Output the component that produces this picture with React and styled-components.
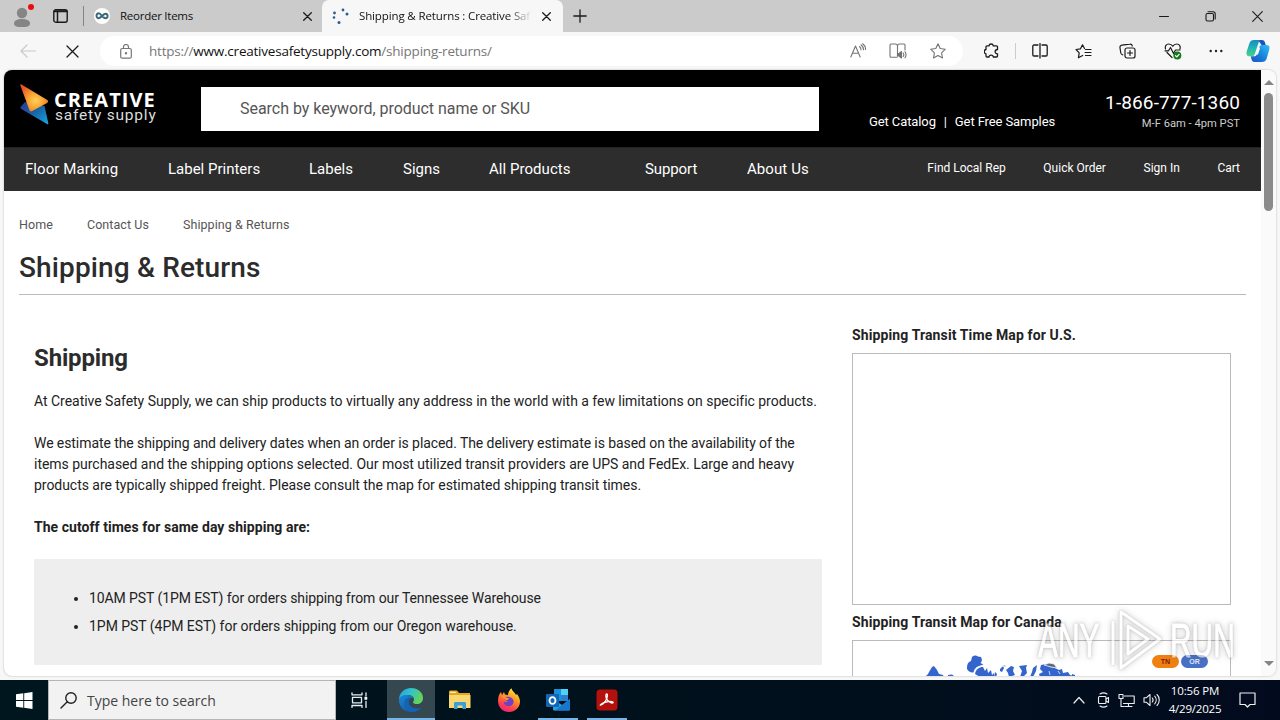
import React from "react";
import styled, { createGlobalStyle, css } from "styled-components";

const navLinks = [
  { label: "Floor Marking", width: 143, spacing: 0.08 },
  { label: "Label Printers", width: 141, spacing: 0 },
  { label: "Labels", width: 94, spacing: 0 },
  { label: "Signs", width: 86, spacing: 0 },
  { label: "All Products", width: 156, spacing: 0.05 },
  { label: "Support", width: 102, spacing: -0.1 },
  { label: "About Us", width: 70, spacing: 0.08 },
];

const accountLinks = ["Find Local Rep", "Quick Order", "Sign In", "Cart"];
const breadcrumbs = ["Home", "Contact Us", "Shipping & Returns"];

const cutoffs = [
  {
    text: "10AM PST (1PM EST) for orders shipping from our Tennessee Warehouse",
    spacing: -0.09,
  },
  {
    text: "1PM PST (4PM EST) for orders shipping from our Oregon warehouse.",
    spacing: -0.035,
  },
];

const Icon = ({ w = 18, h = w, children, color = "#1b1b1b", sw = 1.2 }) => (
  <IconSvg
    width={w}
    height={h}
    viewBox={`0 0 ${w} ${h}`}
    fill="none"
    stroke={color}
    strokeWidth={sw}
    strokeLinecap="round"
    strokeLinejoin="round"
  >
    {children}
  </IconSvg>
);

const CloseIcon = () => (
  <Icon w={9} sw={1.3}>
    <path d="M.7.7l7.6 7.6M8.3.7L.7 8.3" />
  </Icon>
);

const TabStrip = () => (
  <Strip>
    <Profile>
      <Icon w={18} h={20} color="none">
        <circle cx="9" cy="6" r="5.2" fill="#858585" />
        <path d="M1 16.500c0-3 3-4.500 8-4.500s8 1.500 8 4.500-3.500 3.500-8 3.500-8-.5-8-3.500z" fill="#858585" />
      </Icon>
      <Dot />
    </Profile>
    <Icon w={15} h={14} sw={1.4}>
      <rect x=".8" y=".8" width="13.400" height="12.400" rx="2" />
      <path d="M1.500 2.300h12" strokeWidth="2" />
      <path d="M4.500 3v10" strokeWidth="1.500" />
    </Icon>
    <StripRule />
    <BackTab>
      <Icon w={16} color="none">
        <circle cx="8" cy="8" r="8" fill="#fdfdfd" />
        <path d="M8 8C6 5.500 4.800 5 3.800 5.500 2 6.300 2 9.300 4 10.200 5.500 10.700 7 9 8 8s2.500-2.700 4-2.300c2 .6 2.300 3.600.3 4.400C10.700 10.800 9.500 9.500 8 8z" stroke="#3b6878" strokeWidth="2" />
      </Icon>
      <BackTitle>Reorder Items</BackTitle>
      <CloseIcon />
    </BackTab>
    <FrontTab>
      <Icon w={17} h={16} color="none">
        <g fill="#2a5f95">
          <circle cx="2.500" cy="5" r="1.400" />
          <circle cx="2" cy="9.500" r="1.300" />
          <circle cx="7" cy="14.500" r="1.500" />
          <circle cx="11" cy="2" r="1.400" />
          <circle cx="15" cy="6" r="1.500" />
        </g>
      </Icon>
      <FrontTitle>Shipping &amp; Returns : Creative Saf</FrontTitle>
      <CloseIcon />
    </FrontTab>
    <NewTab>
      <Icon w={14} sw={1.3}>
        <path d="M7 .8v12.400M.8 7h12.400" />
      </Icon>
    </NewTab>
    <WindowButtons>
      <Icon w={10} sw={1}>
        <path d="M.5 5.500h9" />
      </Icon>
      <Icon w={11} sw={1.1}>
        <rect x="1" y="2.500" width="7.500" height="7.500" rx="1.500" />
        <path d="M3 .8h5c1.500 0 2.200.8 2.200 2.200v5" />
      </Icon>
      <Icon w={11} sw={1.1}>
        <path d="M.7.7l9.600 9.600M10.300.7L.7 10.300" />
      </Icon>
    </WindowButtons>
  </Strip>
);

const Toolbar = () => (
  <Bar>
    <BackSlot>
      <Icon w={16} h={14} color="#c9c9c9">
        <path d="M15.500 7H1M7 1L1 7l6 6" />
      </Icon>
    </BackSlot>
    <Icon w={13} sw={1.3}>
      <path d="M1 1l11 11M12 1L1 12" />
    </Icon>
    <Address>
      <Icon w={12} h={15} color="#777">
        <rect x=".7" y="4.500" width="10.600" height="9.700" rx="1.500" />
        <path d="M3.500 4.500V3a2.500 2.500 0 015 0v1.500" />
        <circle cx="6" cy="9.300" r=".6" fill="#777" />
      </Icon>
      <Url>
        https://<b>www.creativesafetysupply.com</b>/shipping-returns/
      </Url>
      <AddressIcons>
        <Icon w={16} color="#747474" sw={1.1}>
          <path d="M.8 14L5.500 3l4.700 11M2.500 10.300h6M9.500 3.500c1 .8 1.500 2 1.500 3.200M11 1.800c1.500 1.200 2.500 3 2.500 5M12.700.7C14.500 2 15.500 4 15.500 6.500" />
        </Icon>
        <Icon w={18} h={16} color="#747474" sw={1.1}>
          <path d="M8 14.300H2c-.8 0-1-.5-1-1V2c0-.6.400-1 1-1h4.500C8 1 8.500 2 8.500 3v10M8.500 3c0-1.200.5-2 2-2H15c.6 0 1 .4 1 1v5" />
          <path d="M8.500 10.500h1.500l2.500-2v6.500l-2.500-2H8.500z" fill="#747474" />
          <path d="M14.200 10c.7 1 .7 2.500 0 3.500M16 8.800c1.300 1.800 1.300 4 0 6" />
        </Icon>
        <Icon w={16} color="#747474" sw={1.1}>
          <path d="M8 .8l2.200 4.700 5.100.7-3.700 3.600.9 5.200L8 12.500 3.500 15l.9-5.200L.7 6.200l5.100-.7z" />
        </Icon>
      </AddressIcons>
    </Address>
    <Actions>
      <Icon w={16} sw={1.3}>
        <path d="M5 2.800c.3-2.400 4-2.400 4.300 0h3.200c.6 0 1 .4 1 1v2.700c-3 0-3.300 4.300 0 4.300V13c0 .6-.4 1-1 1H9.300c-.2-2.600-4.100-2.600-4.300 0H3c-.6 0-1-.4-1-1v-2.200c-2.300-.3-2.300-4 0-4.300V3.800c0-.6.400-1 1-1z" />
      </Icon>
      <ActionRule />
      <Icon w={16} sw={1.3}>
        <path d="M6 2H2c-.7 0-1.200.5-1.200 1.200v8.600c0 .7.5 1.200 1.200 1.200h4M10 2h4c.7 0 1.200.5 1.200 1.200v8.600c0 .7-.5 1.200-1.200 1.200h-4M8 .5v14.500" />
      </Icon>
      <Icon w={17} h={15} sw={1.2}>
        <path d="M9.500 4.500L7.500.8l-2 4L1 5.500l3.200 3.300-.8 5 4.300-2.300M10.500 5.500H16M10 8.500h6M10.500 11.500H16" />
      </Icon>
      <Icon w={17} h={16} sw={1.2}>
        <rect x="6" y="5" width="10" height="10" rx="2" />
        <path d="M11 7.500v5M8.500 10h5M13.300 3c-.3-1.400-1.200-2-2.500-1.800L3 2.200C1.300 2.500.7 3.500 1 5l.8 5c.2 1 .8 1.700 2 1.800" />
      </Icon>
      <Icon w={18} h={17} sw={1.2}>
        <path d="M1.500 6C.5 3 2.500 1 4.700 1 6.500 1 8 2 8.800 3.300 9.500 2 11 1 12.800 1 15 1 17 3 16 6M3 9.500l5 5M1 7.800h3.500L6.500 4.500l3 6 2-3.500h4.500" />
        <circle cx="13.300" cy="12.500" r="4" fill="#16791e" stroke="none" />
        <path d="M11.500 12.700l1.300 1.200 2.300-2.500" stroke="#fff" />
      </Icon>
      <Icon w={14} h={4} color="none">
        <circle cx="1.700" cy="2" r="1.200" fill="#222" />
        <circle cx="7" cy="2" r="1.200" fill="#222" />
        <circle cx="12.300" cy="2" r="1.200" fill="#222" />
      </Icon>
    </Actions>
    <Icon w={24} color="none">
      <defs>
        <linearGradient id="cpA" x1="0" y1="0" x2="0" y2="1">
          <stop offset="0" stopColor="#1789c9" />
          <stop offset=".5" stopColor="#22b5b0" />
          <stop offset="1" stopColor="#4ad08c" />
        </linearGradient>
        <linearGradient id="cpB" x1="1" y1="0" x2="0" y2="1">
          <stop offset="0" stopColor="#2fc0f4" />
          <stop offset=".6" stopColor="#1578d8" />
          <stop offset="1" stopColor="#2450c8" />
        </linearGradient>
      </defs>
      <path d="M16 23H8.500c-1.700 0-2.500-1-3-2.700L4.700 17.300H8c1.500 0 2.500-.8 3-2.300l2.300-7c.5-1.300 1.300-2 2.700-2h4.500c2.700 0 3.500 2 2.800 4.500L20.500 20c-.7 2-2.200 3-4.500 3z" fill="url(#cpB)" />
      <path d="M8 1h8c1.700 0 2.500 1 3 2.500l.7 2.500h-4.200L13 2.500z" fill="#1b55b8" />
      <path d="M8 1h6.500c-1 .3-1.500 1.300-2 3l-3.700 11c-.5 1.500-1.500 2.300-3 2.300H3.500C.8 17.300 0 15 .7 12.500L3.500 4C4.200 2 5.700 1 8 1z" fill="url(#cpA)" />
      <path d="M12.200 8.500h2L12 15.500h-2.200z" fill="#f3fbff" />
    </Icon>
  </Bar>
);

const Logo = () => (
  <LogoBox>
    <svg width="29" height="41" viewBox="0 0 29 41">
      <defs>
        <radialGradient id="flame" cx=".55" cy=".6" r=".65">
          <stop offset="0" stopColor="#ffd35a" />
          <stop offset=".45" stopColor="#f9a130" />
          <stop offset="1" stopColor="#ea5128" />
        </radialGradient>
        <linearGradient id="wave" x1="0" y1="0" x2="1" y2="1">
          <stop offset="0" stopColor="#303394" />
          <stop offset=".5" stopColor="#1765a8" />
          <stop offset="1" stopColor="#18a8e0" />
        </linearGradient>
      </defs>
      <path d="M5 18L1 22.500c-.8 1-.7 2 .3 2.600L27 40c1 .6 1.500 0 1.300-1L24.500 22z" fill="url(#wave)" />
      <path d="M1.500.5c-.8-.5-1.300 0-1.100.9l9 24.600c.6 1.500 1.700 1.800 2.900 1l14.700-8c1.300-.8 1.500-2 .3-3z" fill="url(#flame)" />
    </svg>
    <LogoWords>
      <LogoName>CREATIVE</LogoName>
      <LogoSub>safety supply</LogoSub>
    </LogoWords>
  </LogoBox>
);

const SiteHeader = () => (
  <>
    <Masthead>
      <Logo />
      <SearchBox>Search by keyword, product name or SKU</SearchBox>
      <Requests>
        <span>Get Catalog</span>
        <i>|</i>
        <span>Get Free Samples</span>
      </Requests>
      <Contact>
        <Phone>1-866-777-1360</Phone>
        <Hours>M-F 6am - 4pm PST</Hours>
      </Contact>
    </Masthead>
    <Nav>
      {navLinks.map((link) => (
        <NavLink key={link.label} $width={link.width} $spacing={link.spacing}>
          {link.label}
        </NavLink>
      ))}
      <AccountNav>
        {accountLinks.map((label) => (
          <span key={label}>{label}</span>
        ))}
      </AccountNav>
    </Nav>
  </>
);

const CanadaMap = () => (
  <svg width="377" height="36" viewBox="0 0 377 36">
    <g fill="#3465cd">
      <path d="M72 36l3-3 1-2 3-5 2-1 3 4 2 4 4 1 1 2zM95 34l4-.5 2 1.500-1 1h-5z" />
      <path d="M114 28c0-5 1-7 4-8l1-4c2-2 4-2 6-.5l3 .5c1 2 1.500 4-.5 6l3 1.500-3 1c-4 1-6 3-7 7-3 .5-5-1-6.500-3.500z" />
      <path d="M122 33c1-5 4-7 8-7l2 4 2-3 1 5 3-3 1 5 2-2v4h-14z" />
      <path d="M147 28l3-3 1 2-2 4-2-1zM142 31l2 2-1 3h-2zM153 29l5-4 3 1-1 4 2 4-6 2-1-4zM166 25l8-1-1 3 1 5-4 4h-3l2-6zM180 27l4-3-1 6-3 6h-3l2-5z" />
      <path d="M188 24l5-1 4 3 5 1 4 2 3-1 1 4 5-1 2 3 4 1v1h-34l-1-3 4-2-3-3z" />
      <path d="M219 33l3 1v2h-3z" />
    </g>
    <path d="M191 24l5-2 5 1 3 4-6-1zM149 25l3-1 1 2zM205 30l2 3M196 30l1 4" fill="#5d6b78" stroke="#eef3fb" strokeWidth=".8" />
  </svg>
);

const Content = () => (
  <Body>
    <Crumbs>
      {breadcrumbs.map((crumb) => (
        <span key={crumb}>{crumb}</span>
      ))}
    </Crumbs>
    <PageTitle>Shipping &amp; Returns</PageTitle>
    <Columns>
      <Article>
        <SectionTitle>Shipping</SectionTitle>
        <Line $spacing={-0.026}>
          At Creative Safety Supply, we can ship products to virtually any address in the world with a few limitations on specific products.
        </Line>
        <Gap />
        <Line $spacing={-0.078}>
          We estimate the shipping and delivery dates when an order is placed. The delivery estimate is based on the availability of the
        </Line>
        <Line $spacing={-0.026}>
          items purchased and the shipping options selected. Our most utilized transit providers are UPS and FedEx. Large and heavy
        </Line>
        <Line $spacing={-0.04}>
          products are typically shipped freight. Please consult the map for estimated shipping transit times.
        </Line>
        <Gap />
        <Line $bold $spacing={0.045}>The cutoff times for same day shipping are:</Line>
        <Cutoffs>
          {cutoffs.map((cutoff) => (
            <Cutoff key={cutoff.text} $spacing={cutoff.spacing}>
              {cutoff.text}
            </Cutoff>
          ))}
        </Cutoffs>
      </Article>
      <Aside>
        <MapTitle>Shipping Transit Time Map for U.S.</MapTitle>
        <MapFrame />
        <MapTitle $next>Shipping Transit Map for Canada</MapTitle>
        <MapFrame>
          <CanadaMap />
          <Legend>
            <Pill>TN</Pill>
            <Pill $blue>OR</Pill>
          </Legend>
        </MapFrame>
      </Aside>
    </Columns>
  </Body>
);

const Taskbar = () => (
  <Tasks>
    <StartButton>
      <svg width="17" height="17" viewBox="0 0 17 17" fill="#fff">
        <path d="M0 2.300L7.300 1.300V8H0zM8.200 1.200L16.500 0v8H8.200zM0 9h7.300v6.700L0 14.700zM8.200 9h8.300v8l-8.300-1.200z" />
      </svg>
    </StartButton>
    <TaskSearch>
      <Icon w={18} h={17} sw={1.4} color="#222">
        <circle cx="11" cy="6" r="5.200" />
        <path d="M7.300 9.700L1 16" />
      </Icon>
      <span>Type here to search</span>
    </TaskSearch>
    <TaskView>
      <Icon w={17} h={16} color="#e8eef2" sw={1.3}>
        <path d="M1 .8v2h10v-2M1 15.500v-2h10v2M1.500 5.300h9v5.500h-9zM15 .8v3M15 9.500v6" />
        <path d="M14 5h2v2.500h-2z" fill="#fff" strokeWidth=".6" />
      </Icon>
    </TaskView>
    <TaskButton $active $running>
      <Icon w={24} color="none">
        <defs>
          <linearGradient id="edgeTop" x1="0" y1="0" x2="1" y2=".4">
            <stop offset="0" stopColor="#249fe0" />
            <stop offset=".5" stopColor="#30c3cb" />
            <stop offset="1" stopColor="#63d35a" />
          </linearGradient>
          <linearGradient id="edgeLow" x1="0" y1="0" x2="1" y2="1">
            <stop offset="0" stopColor="#1b8add" />
            <stop offset="1" stopColor="#124a91" />
          </linearGradient>
        </defs>
        <path d="M0 12C0 5 5 0 12 0s12 4.500 12 10c0 4-3 6-6 6-2.500 0-4-.8-4-1.800 0-.8 1-1.200 1-3C15 9 12.500 7 9 7c-5 0-9 3-9 5z" fill="url(#edgeTop)" />
        <path d="M0 12c0-3.500 4-5 8-5 3.500 0 6 1.500 6.700 3.500C12 9 9.500 11 9.500 14c0 4 4 6.500 8 6.500 2 0 3.700-.6 5-1.300C20.300 22.500 16.500 24 12 24 5 24 0 19 0 12z" fill="url(#edgeLow)" />
        <path d="M9.500 14c0-2 1.200-3.400 2.700-4-3-1.400-7 .8-7 5.500 0 4.500 3.500 8.200 7.300 8.500 4.500 0 8-2 10-4.800-5 2.800-13 .8-13-5.200z" fill="#1464b4" />
      </Icon>
    </TaskButton>
    <TaskButton>
      <Icon w={22} h={20} color="none">
        <path d="M0 2c0-1 .5-1.500 1.500-1.500H8L10 3h11v14H0z" fill="#e6a526" />
        <path d="M0 5h21.500v13H0z" fill="#fcd770" />
        <path d="M5 19v-5.500c0-1 .5-1.500 1.500-1.500h9c1 0 1.500.5 1.500 1.500V19h-3.500v-3.500h-5V19z" fill="#3a9ed8" />
        <path d="M1.500 2.300h5" stroke="#fff0b0" />
      </Icon>
    </TaskButton>
    <TaskButton>
      <Icon w={24} color="none">
        <defs>
          <linearGradient id="fox" x1=".8" y1="0" x2=".3" y2="1">
            <stop offset="0" stopColor="#fff04a" />
            <stop offset=".4" stopColor="#ff9a22" />
            <stop offset=".8" stopColor="#ff3850" />
            <stop offset="1" stopColor="#e52a84" />
          </linearGradient>
        </defs>
        <path d="M1 13c0-4 1-7 3-9l1 3 2-3 1 2.500c1 0 2 .2 3 .7 0-3 1.500-5.500 3.500-7C15 3 18 4.500 19 7l1-1c2 3 3 5 3 7.500C23 19.500 18 24 12 24S1 19.500 1 13z" fill="url(#fox)" />
        <path d="M7.500 11c1-2 3-2.500 5-2 3 .7 4.500 3 4 5.500-.5 2.700-3 4-5 3.700-3-.3-5-2.200-5-4.700 1.500 1 3.500 1 4.500-.5-1.500 0-3-.5-3.500-2z" fill="#7040c5" />
        <path d="M5 8.500c1.500-.5 3 0 4 1.200l3 .5c-.3 1.500-2 1.500-2.500 2.300" fill="#ff9730" />
      </Icon>
    </TaskButton>
    <TaskButton $running $narrow>
      <Icon w={26} h={22} color="none">
        <path d="M9 0h14v12H9z" fill="#1a91df" />
        <path d="M16 0h7v6h-7z" fill="#4fd0f5" />
        <path d="M16 6h7v6h-7z" fill="#2a7fd0" />
        <path d="M8 10l9 6 8-6v10c0 1-.5 1.500-1.500 1.500h-14C8.500 21.500 8 21 8 20z" fill="#2b9fe5" />
        <path d="M25 10L10 21.500h13.500c1 0 1.500-.5 1.500-1.500z" fill="#1777c8" />
        <rect x="1" y="5" width="13" height="13" rx="1" fill="#1067b5" />
        <ellipse cx="7.500" cy="11.500" rx="3" ry="3.400" stroke="#fff" strokeWidth="1.800" />
      </Icon>
    </TaskButton>
    <TaskButton $running $narrow>
      <Icon w={22} color="none">
        <rect x=".5" y=".5" width="21" height="21" rx="3.500" fill="#b5110c" />
        <path d="M5 16c-2 1 .5-2 5-3s8-.5 7 .8c-1 1-5-1-6.500-4-1-2.500-.8-5 .2-5s1 3-.5 6S6.500 15.500 5 16z" stroke="#fff" strokeWidth="1.300" />
      </Icon>
    </TaskButton>
    <Tray>
      <Icon w={12} h={8} color="#eee">
        <path d="M1 7l5-5.500L11 7" />
      </Icon>
      <Icon w={13} h={16} color="#eee" sw={1.1}>
        <rect x="1.500" y="4.500" width="7.500" height="7" rx="1" />
        <path d="M9 7l2.500-1.500v5L9 9M3 2c2-1.300 5-1.300 7 0M3 14c2 1.300 5 1.300 7 0" />
      </Icon>
      <Icon w={17} h={15} color="#eee" sw={1.1}>
        <path d="M6.500 3h9.700v7.500H5.500M10.500 10.500v3M7 13.500h7M1 1.500h4v4H1zM3 5.500v8h3" />
      </Icon>
      <Icon w={17} h={14} color="#eee" sw={1.1}>
        <path d="M1 4.700h2.500L7 1.500v11L3.500 9.300H1zM9.300 5c1 1.200 1 2.800 0 4M11.700 3.200c2 2.200 2 5.400 0 7.600M14 1.500c3 3 3 8 0 11" />
      </Icon>
      <Clock>
        <ClockLine $spacing={-0.15}>10:56 PM</ClockLine>
        <ClockLine $spacing={-0.2}>4/29/2025</ClockLine>
      </Clock>
      <Icon w={17} h={16} color="#eee">
        <path d="M1 1h15v11.500h-5L8.500 15 6 12.500H1z" />
      </Icon>
    </Tray>
  </Tasks>
);

export default function App() {
  return (
    <Screen>
      <GlobalStyle />
      <TabStrip />
      <Toolbar />
      <Viewport>
        <Page>
          <SiteHeader />
          <Content />
        </Page>
        <Scrollbar>
          <Arrow />
          <Thumb />
          <Arrow $down />
        </Scrollbar>
      </Viewport>
      <Taskbar />
      <Watermark>
        <span>ANY</span>
        <svg width="56" height="64" viewBox="0 0 56 64" fill="none" stroke="#fff" strokeLinejoin="round">
          <path d="M6 13v44M14 4v56l39-29zM21 18v28l20-15z" strokeWidth="3" />
        </svg>
        <span>RUN</span>
      </Watermark>
    </Screen>
  );
}

const GlobalStyle = createGlobalStyle`
  * {
    box-sizing: border-box;
  }
  body {
    margin: 0;
    overflow: hidden;
  }
`;

const chromeFont = css`
  font-family: "Open Sans", "Noto Sans", sans-serif;
`;

const IconSvg = styled.svg`
  display: block;
  flex: none;
`;

const Screen = styled.div`
  position: relative;
  display: flex;
  flex-direction: column;
  width: 1280px;
  height: 720px;
  overflow: hidden;
  background: #f7f7f7;
  font-family: Roboto, sans-serif;
  white-space: nowrap;
`;

const Strip = styled.div`
  display: flex;
  align-items: center;
  height: 32px;
  flex: none;
  padding-left: 13px;
  background: #cbcbcb;
  ${chromeFont}
  font-size: 11.500px;
  line-height: 16px;
  letter-spacing: -0.25px;
  color: #111;
`;

const Profile = styled.div`
  position: relative;
  width: 40px;
  padding-top: 1px;
`;

const Dot = styled.span`
  position: absolute;
  left: 15px;
  top: -2px;
  width: 6px;
  height: 6px;
  border-radius: 50%;
  background: #e80c10;
`;

const StripRule = styled.span`
  width: 1px;
  height: 20px;
  margin-left: 15px;
  background: #858585;
`;

const BackTab = styled.div`
  display: flex;
  align-items: center;
  width: 238px;
  padding: 0 10px 0 10px;
`;

const BackTitle = styled.span`
  flex: 1;
  margin-left: 10px;
`;

const FrontTab = styled.div`
  display: flex;
  align-items: center;
  align-self: stretch;
  width: 241px;
  padding: 0 11px 0 10px;
  border-radius: 7px 7px 0 0;
  background: #f7f7f7;
`;

const FrontTitle = styled.span`
  width: 173px;
  margin: 0 10px 0 10px;
  overflow: hidden;
  letter-spacing: -0.13px;
  mask-image: linear-gradient(90deg, #000 86%, transparent);
`;

const NewTab = styled.div`
  padding-left: 10px;
`;

const WindowButtons = styled.div`
  display: flex;
  align-items: center;
  gap: 36px;
  margin-left: auto;
  padding-right: 17px;
`;

const Bar = styled.div`
  display: flex;
  align-items: center;
  height: 38px;
  flex: none;
  padding: 0 10px 0 0;
`;

const BackSlot = styled.div`
  width: 66px;
  padding-left: 20px;
`;

const Address = styled.div`
  display: flex;
  align-items: center;
  width: 863px;
  height: 30px;
  margin-left: 21px;
  padding: 0 17px 0 20px;
  border-radius: 15px;
  background: #fff;
`;

const Url = styled.div`
  margin-left: 17px;
  ${chromeFont}
  font-size: 13.500px;
  letter-spacing: -0.22px;
  color: #777;

  b {
    font-weight: 400;
    color: #111;
  }
`;

const AddressIcons = styled.div`
  display: flex;
  align-items: center;
  gap: 23px;
  margin-left: auto;
`;

const Actions = styled.div`
  display: flex;
  flex: 1;
  align-items: center;
  justify-content: space-between;
  padding: 0 23px 0 21px;
`;

const ActionRule = styled.span`
  width: 1px;
  height: 16px;
  margin: 0 -12px;
  background: #ccc;
`;

const Viewport = styled.div`
  display: flex;
  height: 606px;
  flex: none;
  margin: 0 4px 4px;
  overflow: hidden;
  border-radius: 8px;
  background: #fff;
  box-shadow: 0 0 2px #aaa;
`;

const Page = styled.div`
  width: 1257px;
  overflow: hidden;
`;

const Scrollbar = styled.div`
  display: flex;
  flex: 1;
  flex-direction: column;
  align-items: center;
  padding: 10px 0;
  background: #fafafa;
`;

const Arrow = styled.span`
  border: 5px solid transparent;
  border-top-width: 0;
  border-bottom: 5px solid #858585;
  ${(props) =>
    props.$down &&
    css`
      margin-top: auto;
      transform: rotate(180deg);
    `}
`;

const Thumb = styled.span`
  width: 9px;
  height: 118px;
  margin-top: 8px;
  border-radius: 5px;
  background: #8b8b8b;
`;

const Masthead = styled.header`
  display: flex;
  height: 77px;
  background: #000;
  color: #fff;
`;

const LogoBox = styled.div`
  display: flex;
  width: 197px;
  padding: 14px 0 0 16px;
`;

const LogoWords = styled.div`
  margin: 8px 0 0 5px;
`;

const LogoName = styled.div`
  font: 700 20px/16px "Open Sans", sans-serif;
  letter-spacing: 1.05px;
`;

const LogoSub = styled.div`
  margin-left: 1px;
  font-size: 15.500px;
  line-height: 14px;
  letter-spacing: 0.8px;
  color: #ddd;
`;

const SearchBox = styled.div`
  width: 618px;
  height: 44px;
  margin-top: 17px;
  padding-left: 39px;
  background: #fff;
  color: #555;
  font-size: 16px;
  line-height: 43px;
  letter-spacing: -0.03px;
`;

const Requests = styled.div`
  display: flex;
  margin: 44px 0 0 50px;
  font-size: 13px;
  line-height: 16px;
  letter-spacing: -0.1px;

  i {
    width: 19px;
    font-style: normal;
    text-align: center;
  }
`;

const Contact = styled.div`
  margin: 22px 21px 0 auto;
  text-align: right;
`;

const Phone = styled.div`
  font-size: 19px;
  line-height: 22px;
  letter-spacing: 0.12px;
`;

const Hours = styled.div`
  margin-top: 2px;
  font-size: 11.200px;
  line-height: 15px;
  color: #ccc;
`;

const Nav = styled.nav`
  display: flex;
  height: 44px;
  padding: 0 21px;
  border-top: 1px solid #222;
  background: #2d2d2d;
  color: #fff;
`;

const NavLink = styled.span`
  width: ${(props) => props.$width}px;
  font-size: 15px;
  line-height: 42px;
  letter-spacing: ${(props) => props.$spacing}px;
`;

const AccountNav = styled.div`
  display: flex;
  gap: 37.600px;
  margin-left: auto;
  font-size: 12px;
  line-height: 41px;
`;

const Body = styled.main`
  padding: 25px 15px 0;
  color: #222;
`;

const Crumbs = styled.div`
  display: flex;
  gap: 34px;
  font-size: 12.500px;
  line-height: 18px;
  letter-spacing: 0.07px;
  color: #555;
`;

const PageTitle = styled.h1`
  height: 61px;
  margin: 0;
  padding-top: 18px;
  border-bottom: 1px solid #bbb;
  font-weight: 500;
  font-size: 28px;
  line-height: 32px;
  letter-spacing: 0.14px;
  color: #2c2c2c;
`;

const Columns = styled.div`
  display: flex;
  justify-content: space-between;
  padding: 0 15px;
`;

const Article = styled.div`
  width: 788px;
  padding-top: 48px;
`;

const SectionTitle = styled.h2`
  margin: 0 0 18px;
  font-weight: 700;
  font-size: 24px;
  line-height: 30px;
  letter-spacing: -0.15px;
  color: #2c2c2c;
`;

const Line = styled.div`
  font-size: 14px;
  line-height: 21px;
  font-weight: ${(props) => (props.$bold ? 700 : 400)};
  letter-spacing: ${(props) => props.$spacing}px;
`;

const Gap = styled.div`
  height: 21px;
`;

const Cutoffs = styled.ul`
  height: 106px;
  margin: 21px 0 0;
  padding: 25px 0 0 55px;
  background: #eee;
  font-size: 14px;
  line-height: 28px;
`;

const Cutoff = styled.li`
  letter-spacing: ${(props) => props.$spacing}px;
`;

const Aside = styled.aside`
  width: 379px;
  padding-top: 30px;
`;

const MapTitle = styled.div`
  margin-top: ${(props) => (props.$next ? 7 : 0)}px;
  margin-bottom: 7px;
  font-weight: 700;
  font-size: 14px;
  line-height: 21px;
  letter-spacing: 0.12px;
`;

const MapFrame = styled.div`
  position: relative;
  height: 252px;
  border: 1px solid #bbb;
`;

const Legend = styled.div`
  position: absolute;
  left: 299px;
  top: 14px;
  display: flex;
  gap: 2px;
`;

const Pill = styled.span`
  width: 27px;
  height: 13px;
  border-radius: 7px;
  background: ${(props) => (props.$blue ? "#4870c4" : "#f0800f")};
  color: ${(props) => (props.$blue ? "#dce6ff" : "#7a1c10")};
  font: 700 7px/13px "Liberation Sans", sans-serif;
  text-align: center;
`;

const Tasks = styled.footer`
  display: flex;
  height: 40px;
  flex: none;
  background: linear-gradient(90deg, #00161e, #00101c 60%, #020b1e);
`;

const StartButton = styled.div`
  display: flex;
  align-items: center;
  justify-content: center;
  width: 48px;
`;

const TaskSearch = styled.div`
  display: flex;
  align-items: center;
  gap: 9px;
  width: 288px;
  padding-left: 11px;
  border: 1px solid #b5b5b5;
  background: #f2f2f2;
  ${chromeFont}
  font-size: 14px;
  color: #444;
`;

const TaskView = styled.div`
  display: flex;
  align-items: center;
  width: 51px;
  padding-left: 15px;
`;

const TaskButton = styled.div`
  display: flex;
  align-items: center;
  justify-content: center;
  width: ${(props) => (props.$active ? 48 : 49)}px;
  background: ${(props) =>
      props.$running ? "linear-gradient(#76b5e8, #76b5e8)" : "none"}
    bottom / ${(props) => (props.$narrow ? 40 : 48)}px 2px no-repeat;
  background-color: ${(props) => (props.$active ? "#35474f" : "transparent")};
`;

const Tray = styled.div`
  display: flex;
  align-items: center;
  gap: 10px;
  margin-left: auto;
  padding-right: 24px;

  > svg:first-child {
    margin-right: 2px;
  }

  > svg:nth-child(3) {
    margin: 0 -2px;
  }
`;

const Clock = styled.div`
  display: flex;
  flex-direction: column;
  align-items: center;
  width: 54px;
  margin: 0 7px 0 -2px;
  ${chromeFont}
  color: #fff;
`;

const ClockLine = styled.span`
  font-size: 11.500px;
  line-height: 18px;
  letter-spacing: ${(props) => props.$spacing}px;
`;

const Watermark = styled.div`
  position: absolute;
  left: 1038px;
  top: 608px;
  display: flex;
  align-items: center;
  gap: 7px;
  font: 400 49px/64px "Liberation Sans", sans-serif;
  color: #fff;
  opacity: 0.62;
  filter: drop-shadow(0 0 1px rgba(80, 80, 80, 0.5))
    drop-shadow(0 0 3px rgba(80, 80, 80, 0.45));

  span {
    display: block;
    width: 62px;
    transform: scaleX(0.61);
    transform-origin: left;
    -webkit-text-stroke: 1px #fff;
  }
`;
